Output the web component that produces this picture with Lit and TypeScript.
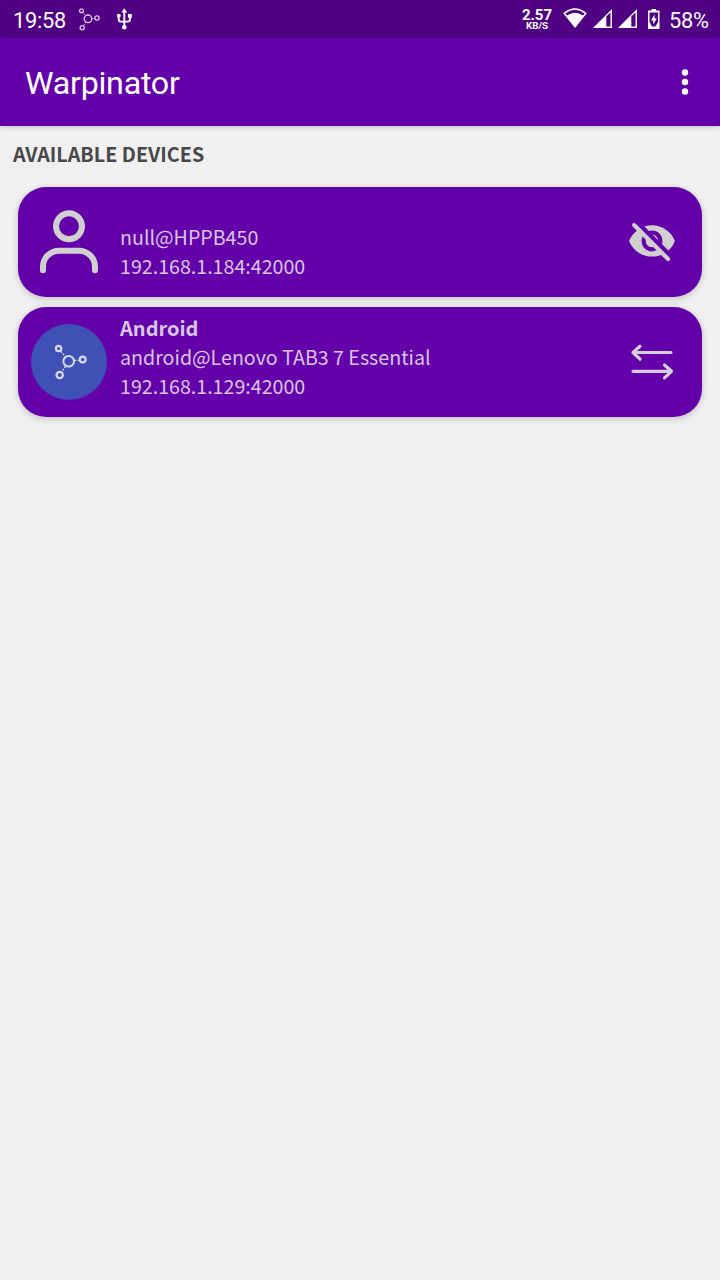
import { LitElement, html, css, svg } from "lit";
import { customElement, property } from "lit/decorators.js";

const person = svg`<circle cx="29" cy="17" r="13"/><path d="M3 61v-3.500a16 16 0 0 1 16-16h20a16 16 0 0 1 16 16V61"/>`;

@customElement("status-bar")
class StatusBar extends LitElement {
  static styles = css`
    :host { display: flex; height: 38px; background: #4f0083; color: #fff; font-family: Roboto, sans-serif; }
    .time { font-size: 21.800px; letter-spacing: -.25px; line-height: 41px; width: 65px; padding-left: 13px; white-space: nowrap; }
    .icons { flex: none; display: block; }
    .gap { flex: 1; }
    .speed { width: 40px; text-align: center; font-weight: 700; padding-top: 9px; }
    .rate { font-size: 15px; line-height: 13px; }
    .unit { font-size: 9.800px; line-height: 8px; }
    .battery { font-size: 21.800px; letter-spacing: -.2px; line-height: 41px; width: 51px; white-space: nowrap; }
  `;
  render() {
    return html`
      <div class="time">19:58</div>
      <svg class="icons" width="70" height="38" viewBox="78 0 70 38" fill="none" stroke="#fff">
        <g stroke="#d9c9e6" stroke-width="1.300">
          <circle cx="88" cy="18.800" r="3.800"/><circle cx="81.500" cy="10.700" r="1.900"/><circle cx="97" cy="18" r="2.100"/><circle cx="82.200" cy="27.700" r="2.100"/>
          <path stroke-width="1" stroke-dasharray="1.500 .8" d="M83 12.500l2.600 3.200M91.800 18.500h3M85.800 22l-2.300 3.600"/>
        </g>
        <path stroke-width="1.900" d="M124.300 11v16M118.700 16v3.600q0 2 2 2h7.200q2 0 2-2v-4"/>
        <path fill="#fff" stroke="none" d="M124.300 8.300l2.900 4.200h-5.800zM128 14h3.800v3.800H128z"/>
        <circle cx="118.800" cy="15.800" r="2" fill="#fff" stroke="none"/><circle cx="124.300" cy="27.200" r="2.300" fill="#fff" stroke="none"/>
      </svg>
      <div class="gap"></div>
      <div class="speed"><div class="rate">2.57</div><div class="unit">KB/S</div></div>
      <svg class="icons" width="112" height="38" viewBox="557 0 112 38" fill="#fff">
        <path d="M575 28L563.200 13.200Q575 3.200 586.800 13.200zM565.300 13.400L567 15.500Q575 10 583 15.500L584.700 13.400Q575 6 565.300 13.400z" fill-rule="evenodd"/>
        <path fill-rule="evenodd" d="M593 28L612 9V28zM606.300 16.500V26.500H610.500V12.500z"/>
        <path fill-rule="evenodd" d="M618 28L637 9V28zM631.300 16.500V26.500H635.500V12.500z"/>
        <path fill-rule="evenodd" d="M651.500 9h4.500v1.600h3.500V29H648V10.600h3.500zM649.500 12.500V22L652 26.500H655.500L658 22V12.500z"/>
        <path d="M654.600 14.500L651 20.500H653.200V24.500L656.800 18.500H654.600z"/>
      </svg>
      <div class="battery">58%</div>
    `;
  }
}

@customElement("device-card")
class DeviceCard extends LitElement {
  @property() name = "";
  @property() user = "";
  @property() address = "";
  @property({ type: Boolean }) connected = false;

  static styles = css`
    :host {
      display: flex; box-sizing: border-box; height: 110px; border-radius: 28px; background: #6400aa;
      box-shadow: 0 2px 7px rgba(0,0,0,.17), 0 0 5px rgba(0,0,0,.05); color: #d8c5e4;
    }
    svg { display: block; flex: none; }
    .avatar { width: 76px; height: 76px; margin: 17px 13px; }
    .text { flex: 1; font-size: 19.640px; line-height: 29px; padding-top: 6px; white-space: nowrap; }
    .name { font-weight: 700; font-size: 20px; height: 29px; }
    .status { width: 50px; height: 50px; margin: 30px 25px 0 0; }
  `;
  render() {
    return html`
      ${this.connected
        ? html`<svg class="avatar" viewBox="31 324 76 76" fill="none" stroke="#d5d9ee">
            <circle cx="69" cy="362" r="38" fill="#3f51b5" stroke="none"/>
            <circle cx="68.700" cy="361.200" r="5.300" stroke-width="2"/>
            <g stroke-width="2.200"><circle cx="58.600" cy="348.500" r="2.700"/><circle cx="82.700" cy="359.500" r="2.900"/><circle cx="59.700" cy="375" r="3.200"/></g>
            <path stroke-width="1.400" stroke-dasharray="1.700 1.300" d="M60.900 351.400l4.100 5M74.700 360.400h4.300M65.400 366.500l-3.500 5.100"/>
          </svg>`
        : html`<svg class="avatar" viewBox="-9 -5.300 76 76" fill="none" stroke="#d0d0d0" stroke-width="6" stroke-linecap="round">${person}</svg>`}
      <div class="text">
        <div class="name">${this.name}</div>
        <div>${this.user}</div>
        <div>${this.address}</div>
      </div>
      ${this.connected
        ? html`<svg class="status" viewBox="627 337 50 50" fill="none" stroke="#d8cce0" stroke-width="3.200" stroke-linecap="round" stroke-linejoin="round">
            <path d="M671 352.500H633M640 346.300L633 352.500L640 359.200M633 371.300H671M664.500 365L671.500 371.300L664.500 377.800"/>
          </svg>`
        : html`<svg class="status" viewBox="0 0 24 24" fill="#d0d0d0">
            <path d="M12 6.500c2.760 0 5 2.240 5 5 0 .51-.1 1-.24 1.460l3.060 3.060c1.390-1.230 2.490-2.770 3.180-4.530C21.270 7.110 17 4 12 4c-1.270 0-2.490.2-3.640.57l2.170 2.170c.47-.14.96-.24 1.470-.24zM2.710 3.160c-.39.39-.39 1.020 0 1.410l1.970 1.970C3.060 7.830 1.770 9.530 1 11.500 2.730 15.890 7 19 12 19c1.520 0 2.970-.3 4.310-.82l2.720 2.720c.39.39 1.020.39 1.410 0 .39-.39.39-1.020 0-1.410L4.130 3.160c-.39-.39-1.030-.39-1.420 0zM12 16.500c-2.760 0-5-2.240-5-5 0-.77.18-1.500.49-2.140l1.570 1.570c-.03.18-.06.37-.06.57 0 1.660 1.340 3 3 3 .2 0 .38-.03.57-.07L14.140 16c-.65.32-1.370.5-2.140.5zm2.970-5.330c-.15-1.400-1.250-2.490-2.640-2.640l2.640 2.640z"/>
          </svg>`}
    `;
  }
}

@customElement("app-root")
class AppRoot extends LitElement {
  static styles = css`
    :host { display: block; height: 1280px; background: #f0f0f0; overflow: hidden; font-family: "Noto Sans CJK SC", sans-serif; }
    .toolbar {
      display: flex; align-items: center; justify-content: space-between; box-sizing: border-box; height: 88px;
      padding: 0 31px 0 25px; background: #6400aa; color: #fff; box-shadow: 0 1px 5px rgba(0,0,0,.2);
    }
    h1 { margin: 0; padding-top: 2px; font: 400 32.200px/88px Roboto, sans-serif; letter-spacing: -.25px; }
    .menu { display: block; }
    h2 { margin: 0; padding: 13px 13px 0; height: 43px; font-size: 19.760px; line-height: 29px; font-weight: 700; color: #484848; white-space: nowrap; }
    .list { display: flex; flex-direction: column; gap: 10px; margin: 0 13px; padding: 5px 5px 20px; overflow: hidden; }
  `;
  render() {
    return html`
      <status-bar></status-bar>
      <div class="toolbar">
        <h1>Warpinator</h1>
        <svg class="menu" width="8" height="28" viewBox="0 0 8 28" fill="#fff"><circle cx="4" cy="4.500" r="3.200"/><circle cx="4" cy="14" r="3.200"/><circle cx="4" cy="23.500" r="3.200"/></svg>
      </div>
      <h2>AVAILABLE DEVICES</h2>
      <div class="list">
        <device-card user="null@HPPB450" address="192.168.1.184:42000"></device-card>
        <device-card connected name="Android" user="android@Lenovo TAB3 7 Essential" address="192.168.1.129:42000"></device-card>
      </div>
    `;
  }
}
